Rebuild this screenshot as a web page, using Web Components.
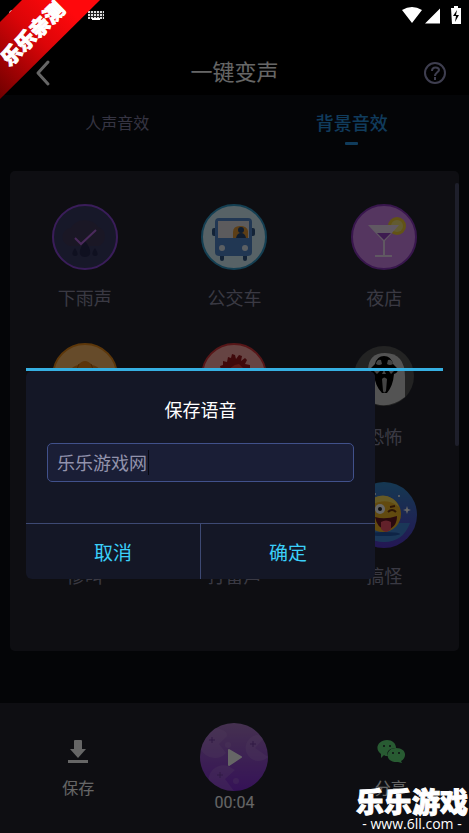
<!DOCTYPE html>
<html lang="zh-CN">
<head>
<meta charset="utf-8">
<meta name="viewport" content="width=device-width, initial-scale=1">
<title>一键变声</title>
<style>
html, body { margin: 0; background: #000; }
body { font-family: Roboto, "Noto Sans CJK SC", sans-serif; color: #fff; }
</style>
</head>
<body>
<voice-app></voice-app>

<script>
// small helper: attach an open root and fill it
function paint(el, html) {
    el.attachShadow({mode: "open"});
    var t = document.createElement("template");
    t.innerHTML = html;
    el.shadowRoot.appendChild(t.content.cloneNode(true));
}

// shared button reset
var reset = `button { font: inherit; color: inherit; background: none; border: 0; padding: 0; margin: 0; cursor: pointer; }
svg { display: block; }`;

// round pictures of the sound effects
var pics = {
    rain: `<circle cx="33" cy="33" r="32" fill="#3b3c66" stroke="#9149e0" stroke-width="2"/>
        <path d="M20 42a9 9 0 0 1-1-18a15 13 0 0 1 27-1a10 10 0 0 1 0 19z" fill="#433a5c"/>
        <path d="M33 37c8 10 6 16 0 16s-8-6 0-16M23 44c4 6 3 8 0 8s-4-3 0-8M43 44c4 6 3 8 0 8s-4-3 0-8" fill="#262852"/>
        <path d="M23 34l6 6L44 26" fill="none" stroke="#bb69e8" stroke-width="2"/>`,
    bus: `<circle cx="33" cy="33" r="32" fill="#d9f5ff" stroke="#339dce" stroke-width="2"/>
        <rect x="11" y="24" width="5" height="8" rx="2" fill="#315889"/><rect x="49" y="24" width="5" height="8" rx="2" fill="#315889"/>
        <rect x="19" y="49" width="4" height="8" rx="2" fill="#315889"/><rect x="42" y="49" width="4" height="8" rx="2" fill="#315889"/>
        <rect x="14" y="14" width="37" height="38" rx="4" fill="#538bcf"/><rect x="17" y="17" width="31" height="17" fill="#e6e4e8"/>
        <path d="M32 34V28q0-6 7-6t8 5v7z" fill="#e79b38"/><circle cx="40" cy="26" r="3" fill="#284976"/><path d="M35 34q1-5 5-5t5 5z" fill="#284976"/>
        <circle cx="21" cy="44" r="3" fill="#e7eff8"/><circle cx="44" cy="44" r="3" fill="#e7eff8"/>`,
    club: `<circle cx="33" cy="33" r="32" fill="#d488f0" stroke="#8d38c0" stroke-width="2"/>
        <circle cx="46" cy="22" r="9" fill="#f5cf35"/><circle cx="46" cy="22" r="6" fill="#f5e47c"/>
        <path d="M17 21h31L33 38z" fill="#f0dcf5"/><path d="M26 29h14l-7 7z" fill="#9945c9"/>
        <path d="M33 36v16M24 52h17" stroke="#f0dcf5" stroke-width="2"/>`,
    shell: `<circle cx="33" cy="33" r="32" fill="#ffbc6a" stroke="#e98a19" stroke-width="2"/>
        <path d="M17 28q4-5 9-6 7-8 14 0 6 1 9 6v12H17z" fill="#e3831a"/><path d="M27 21l-4 10M39 21l4 10" stroke="#b35c0b"/>`,
    heart: `<circle cx="33" cy="33" r="32" fill="#ffaba8" stroke="#d9383c" stroke-width="2"/>
        <path d="M20 27l-1-4 3-1v-4l4 1 1-5 3 1 1-4 3 1 1 4 3-4 3 1-1 5 4-3 2 2-2 4 5 1v6l-2 8-9 12H22z" fill="#9e171c"/>
        <path d="M25 32q4-10 13-11l6 6-9 13H24z" fill="#df3d35"/>`,
    scary: `<circle cx="33" cy="33" r="30" fill="#575757"/>
        <path d="M17 58V26q1-16 17-16 20 0 20 24v20q-18 14-37 4z" fill="#d0d0d0"/>
        <path d="M24 21q2-8 9-8t9 8l5 5q0 4-4 5-1 12-7 19h-5q-7-7-8-19-4-1-4-5z"/>
        <path d="M25 21q1-5 5-4l1 4q-3 2-6 0M36 21l1-4q4-1 5 4-3 2-6 0M23 28q4-3 7-1l-4 4zM43 28q-4-3-6-1l3 4zM31 31l2-4 2 4zM31 36q2-3 5 0l-1 12q-2 3-3 0z" fill="#aaa"/>`,
    blank: `<circle cx="33" cy="33" r="32" fill="#485080"/>`,
    funny: `<defs><linearGradient id="g" x2="0" y2="1"><stop stop-color="#358dcc"/><stop offset="1" stop-color="#5a39d1"/></linearGradient></defs>
        <circle cx="33" cy="33" r="33" fill="url(#g)"/><path d="M6 41h53q-7 19-26 19T6 41" fill="#438bdd"/>
        <ellipse cx="33" cy="52" rx="16" ry="2" fill="#245ab0"/>
        <circle cx="32" cy="32" r="18" fill="#f6ba26"/><path d="M15 29a17 17 0 0 1 33-4 22 22 0 0 0-33 4" fill="#ffe15d"/>
        <circle cx="29" cy="27" r="5" fill="#fff"/><circle cx="29" cy="27" r="2" fill="#282828"/>
        <path d="M37 30q4-4 8 0M39 25l5-1" fill="none" stroke="#713510" stroke-width="2"/>
        <path d="M24 35q10 3 22-1 0 12-11 14-9-2-11-13" fill="#691724"/><path d="M30 40q5-3 10 0v7q-5 6-10 0z" fill="#f45469"/>
        <path d="M56 24l1 3 3 1-3 1-1 3-1-3-3-1 3-1z" fill="#fff"/><circle cx="48" cy="14" r="1" fill="#fff"/><circle cx="24" cy="12" r="1" fill="#fff"/>`
};

class StatusBar extends HTMLElement {
    constructor() {
        super();
        paint(this, `<style>
        :host { display: flex; height: 32px; align-items: center; padding: 0 8px; }
        svg { display: block; }
        .right { margin-left: auto; }
        </style>
        <svg width="100" height="32" fill="#fff">
            <circle cx="5" cy="14" r="4"/>
            <path d="M80 11h16v8H80z" fill="#222"/>
            <path d="M80 12h16M80 15h16M80 18h16" stroke="#ddd" stroke-width="2" stroke-dasharray="2 1"/><path d="M84 18h8v2h-8z"/>
        </svg>
        <svg class="right" width="60" height="32" fill="#fff">
            <path d="M1 10q10-6 20 0L11 23zM39 8.500v15H24zM50 8h3V6h4v2h3v16h-9z"/>
            <path d="M56 10l-4 6h3l-1 6 4-7h-3z" fill="#000"/>
        </svg>`);
    }
}
customElements.define("status-bar", StatusBar);

class TopBar extends HTMLElement {
    constructor() {
        super();
        paint(this, `<style>${reset}
        :host { display: flex; height: 63px; align-items: center; justify-content: space-between; padding: 19px 22px 0 32px; box-sizing: border-box; }
        h1 { flex: 1; margin: 0; font-size: 22px; line-height: 30px; font-weight: 400; text-align: center; padding-right: 10px; }
        </style>
        <button aria-label="返回"><svg width="24" height="28" fill="none" stroke="#fff" stroke-width="3" stroke-linecap="round" stroke-linejoin="round"><path d="M16 3L6 14l10 11"/></svg></button>
        <h1><slot></slot></h1>
        <button aria-label="帮助"><svg width="24" height="24" fill="none" stroke="#9c9bc6" stroke-width="2"><circle cx="12" cy="12" r="10"/><path d="M9 10c0-5 7-4 7-1 0 2-4 3-4 6M12 16v3"/></svg></button>`);
    }
}
customElements.define("top-bar", TopBar);

class TabItem extends HTMLElement {
    constructor() {
        super();
        paint(this, `<style>${reset}
        :host { display: flex; flex: 1; justify-content: center; }
        button { align-self: flex-start; display: flex; flex-direction: column; align-items: center; padding-top: 17px; color: #8583a6; font-size: 16px; line-height: 24px; }
        :host([active]) button { color: #2996e6; font-size: 18px; font-weight: 500; }
        i { width: 13px; height: 3px; margin-top: 6px; border-radius: 1px; }
        :host([active]) i { background: #2996e6; }
        </style>
        <button><slot></slot><i></i></button>`);
    }
}
customElements.define("tab-item", TabItem);

class SoundItem extends HTMLElement {
    constructor() {
        super();
        paint(this, `<style>${reset}
        :host { display: flex; justify-content: center; }
        button { display: flex; flex-direction: column; align-items: center; gap: 17px; color: #9290a8; font-size: 18px; line-height: 24px; }
        span { min-height: 24px; }
        </style>
        <button><svg width="66" height="66">${pics[this.getAttribute("pic")]}</svg><span><slot></slot></span></button>`);
    }
}
customElements.define("sound-item", SoundItem);

class PlayerBar extends HTMLElement {
    constructor() {
        super();
        paint(this, `<style>${reset}
        :host { display: flex; height: 130px; background: #23252f; font-size: 16px; line-height: 24px; }
        button { flex: 1; display: flex; flex-direction: column; align-items: center; padding-top: 34px; gap: 12px; justify-content: flex-start; }
        .play { padding-top: 20px; gap: 0; }
        </style>
        <button><svg width="28" height="28" fill="#fff"><path d="M10 4q0-1 1-1h6q1 0 1 1v8h4l-8 9-8-9h4zM4 23h20v3H4z"/></svg>保存</button>
        <button class="play">
            <svg width="68" height="68">
                <defs>
                    <linearGradient id="p" x2="0" y2="1"><stop stop-color="#ad7bc8"/><stop offset="1" stop-color="#852dda"/></linearGradient>
                    <clipPath id="c"><circle cx="34" cy="34" r="34"/></clipPath>
                </defs>
                <g clip-path="url(#c)"><path fill="url(#p)" d="M0 0h68v68H0z"/>
                    <g fill="#c99be5" fill-opacity=".28"><path d="M27 13l-8 8 7 9A15 15 0 1 1 22 7q5 1 5 6M64 15l-9 10 13 9A13 13 0 1 1 58 12zM35 47l-10 9 9 12A15 15 0 1 1 28 43zM28 19a3 3 0 1 1 0 6 3 3 0 0 1 0-6M36 55a3 3 0 1 1 0 6 3 3 0 0 1 0-6"/></g>
                    <path d="M12 14v6M9 17h6M53 18v6M50 21h6M20 49v6M17 52h6" stroke="#7941aa" stroke-width="1"/>
                </g>
                <path d="M29 27l12 7-12 8z" fill="#fff" stroke="#fff" stroke-width="2" stroke-linejoin="round"/>
            </svg>00:04</button>
        <button><svg width="28" height="28" fill="#65e37d">
            <path d="M10 3c5 0 9 3 9 8-7 0-10 4-8 8-2 0-3 0-4-1l-3 3v-4C-3 12 1 3 10 3"/>
            <path d="M19 11c11 0 11 10 5 13l1 2-4-1c-14 1-13-14-2-14"/>
            <g fill="#23252f"><circle cx="7" cy="9" r="1"/><circle cx="13" cy="9" r="1"/><circle cx="16" cy="16" r="1"/><circle cx="22" cy="16" r="1"/></g>
        </svg>分享</button>`);
    }
}
customElements.define("player-bar", PlayerBar);

class SaveDialog extends HTMLElement {
    constructor() {
        super();
        // scrim over the whole screen, dialog sits inside it
        paint(this, `<style>${reset}
        :host { position: absolute; inset: 0; box-sizing: border-box; padding: 368px 26px 0; background: rgba(0,0,0,.6); }
        .line { height: 3px; background: #36b0e2; }
        form { margin-right: 68px; background: #141726; border-radius: 6px; overflow: hidden; font-size: 18px; line-height: 24px; }
        label { display: block; text-align: center; padding: 28px 0 20px; }
        .field { position: relative; margin: 0 21px 41px; }
        input { display: block; box-sizing: border-box; width: 100%; height: 39px; border: 1px solid #41518b; border-radius: 5px; background: #1a1e36; color: #9293ac; font: inherit; padding: 0 9px 2px; outline: 0; }
        .field i { position: absolute; left: 101px; top: 7px; width: 1px; height: 25px; background: #080911; }
        .row { display: flex; border-top: 1px solid #3d4973; }
        .row button { flex: 1; height: 55px; padding-top: 5px; font-size: 19px; color: #3bd0fa; }
        .row button + button { border-left: 1px solid #3d4973; }
        </style>
        <div class="line"></div>
        <form onsubmit="return false">
            <label for="name">保存语音</label>
            <div class="field"><input id="name" type="text" value="乐乐游戏网"><i></i></div>
            <div class="row"><button type="button">取消</button><button type="button">确定</button></div>
        </form>`);
    }
}
customElements.define("save-dialog", SaveDialog);

class CornerRibbon extends HTMLElement {
    constructor() {
        super();
        paint(this, `<style>
        :host { position: absolute; left: 0; top: 0; z-index: 2; }
        svg { display: block; }
        text { font: 900 20px "Noto Sans CJK SC", sans-serif; stroke: #fff; stroke-width: 1px; }
        </style>
        <svg width="100" height="100">
            <defs><linearGradient id="r" x1="1" y1="0" x2="0" y2="1"><stop offset=".2" stop-color="#ff080c"/><stop offset=".5" stop-color="#dc0508"/><stop offset="1" stop-color="#6e0000"/></linearGradient></defs>
            <path d="M22 0h78L0 99V22z" fill="url(#r)"/>
            <text transform="translate(33 34) rotate(-45)" y="7" text-anchor="middle" fill="#fff">乐乐亲测</text>
        </svg>`);
    }
}
customElements.define("corner-ribbon", CornerRibbon);

class SiteMark extends HTMLElement {
    constructor() {
        super();
        paint(this, `<style>
        :host { position: absolute; right: 1px; bottom: 0; text-align: center; }
        b { display: block; font: 900 28px/28px "Noto Sans CJK SC", sans-serif; -webkit-text-stroke: 1px #fff; }
        span { display: block; font: 14px/18px "Open Sans", sans-serif; }
        </style>
        <b>乐乐游戏</b><span>- www.6ll.com -</span>`);
    }
}
customElements.define("site-mark", SiteMark);

class VoiceApp extends HTMLElement {
    constructor() {
        super();
        paint(this, `<style>
        :host { display: flex; flex-direction: column; position: relative; min-height: 100vh; overflow: hidden; }
        /* the system icons stay bright above the scrim */
        status-bar { position: relative; z-index: 1; }
        main { flex: 1; display: flex; flex-direction: column; background: #0c0d12; padding: 0 10px 52px; }
        nav { display: flex; height: 76px; margin: 0 -10px; }
        section { flex: 1; display: flex; background: #23252f; border-radius: 5px; }
        .grid { flex: 1; display: grid; grid-template-columns: repeat(3, 1fr); align-content: start; row-gap: 32px; padding: 33px 0; }
        .bar { width: 4px; height: 263px; margin: 12px 0 0 -4px; border-radius: 2px; background: #4c4f6c; }
        </style>
        <status-bar></status-bar>
        <top-bar>一键变声</top-bar>
        <main>
            <nav><tab-item>人声音效</tab-item><tab-item active>背景音效</tab-item></nav>
            <section>
                <div class="grid">
                    <sound-item pic="rain">下雨声</sound-item>
                    <sound-item pic="bus">公交车</sound-item>
                    <sound-item pic="club">夜店</sound-item>
                    <sound-item pic="shell"></sound-item>
                    <sound-item pic="heart"></sound-item>
                    <sound-item pic="scary">恐怖</sound-item>
                    <sound-item pic="blank">惨叫</sound-item>
                    <sound-item pic="blank">打雷声</sound-item>
                    <sound-item pic="funny">搞怪</sound-item>
                </div>
                <div class="bar"></div>
            </section>
        </main>
        <player-bar></player-bar>
        <save-dialog></save-dialog>
        <corner-ribbon></corner-ribbon>
        <site-mark></site-mark>`);
    }
}
customElements.define("voice-app", VoiceApp);
</script>
</body>
</html>
